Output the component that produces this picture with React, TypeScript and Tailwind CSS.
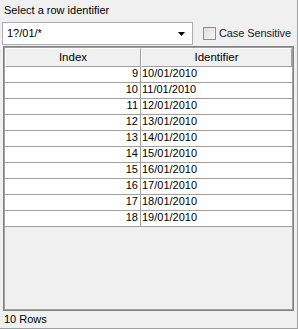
import { useState } from "react";

const rows = [9, 10, 11, 12, 13, 14, 15, 16, 17, 18].map((i) => ({
  index: i,
  id: `${String(i + 1).padStart(2, "0")}/01/2010`,
}));

export default function App() {
  const [caseSensitive, setCaseSensitive] = useState(false);

  return (
    <div className="w-[298px] h-[329px] bg-[#f0f0f0] border-r border-b border-[#a0a0a0] flex flex-col text-[11px] text-black font-['Liberation_Sans',Arial,sans-serif] leading-none">
      <div className="h-[22px] pl-[4px] pt-[5px]">Select a row identifier</div>

      <div className="flex items-center h-[23px] pl-[2px]">
        <div className="w-[191px] h-[23px] bg-white border border-[#abadb3] flex items-center pl-[4px] pr-[6px]">
          <span className="flex-1">1?/01/*</span>
          <svg width="8" height="4" viewBox="0 0 8 4">
            <path d="M0 0h7L3.5 4z" fill="#000" />
          </svg>
        </div>
        <label className="flex items-center ml-[10px] gap-[3px] cursor-pointer whitespace-nowrap">
          <span
            onClick={() => setCaseSensitive(!caseSensitive)}
            className="w-[13px] h-[13px] border border-[#8f8f8f] bg-gradient-to-br from-[#dcdcdc] to-[#f8f8f8] flex items-center justify-center text-[10px]"
          >
            {caseSensitive ? "✓" : ""}
          </span>
          <span className="text-[11px] tracking-[-0.1px] text-[#222]">Case Sensitive</span>
        </label>
      </div>

      <div className="mx-[3px] mt-[1px] flex-1 border border-[#828282] bg-[#f0f0f0] shadow-[inset_-1px_-1px_0_#a0a0a0,inset_1px_1px_0_#a0a0a0] p-[1px] flex flex-col max-h-[266px]">
        <div className="flex h-[19px] text-[11.5px]">
          <div className="w-[136px] flex items-center justify-center border-t border-l border-white border-r border-b border-r-[#a0a0a0] border-b-[#a0a0a0]">
            Index
          </div>
          <div className="flex-1 flex items-center justify-center border-t border-l border-white border-r border-b border-r-[#a0a0a0] border-b-[#a0a0a0]">
            Identifier
          </div>
        </div>
        {rows.map((r) => (
          <div key={r.index} className="flex h-[16px] bg-white border-b border-[#a0a0a0]">
            <div className="w-[136px] border-r border-[#a0a0a0] text-right pr-[2px] pt-[1px]">{r.index}</div>
            <div className="flex-1 pl-[1px] pt-[1px]">{r.id}</div>
          </div>
        ))}
      </div>

      <div className="h-[17px] pl-[4px] pt-[3px]">10 Rows</div>
    </div>
  );
}
